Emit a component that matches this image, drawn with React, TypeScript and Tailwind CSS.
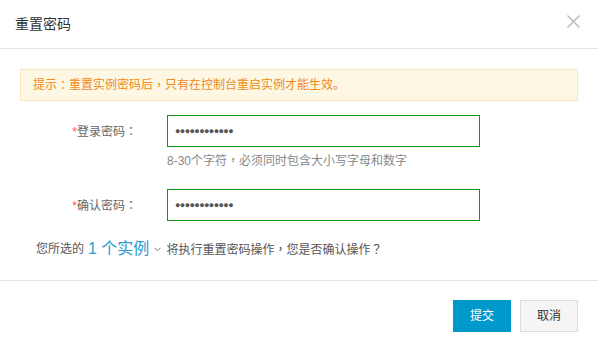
import React from "react";

const font = { fontFamily: '"Liberation Sans", "Noto Sans CJK SC", sans-serif' };
const tc = { fontFamily: '"Noto Sans CJK TC", sans-serif' };

function P({ c }: { c: string }) {
  return <span style={tc}>{c}</span>;
}

function Row({ label, children }: { label: string; children: React.ReactNode }) {
  return (
    <div className="flex items-center pl-[20px]">
      <div className="w-[117px] text-right text-[12px] text-[#666] leading-[18px]">
        <span className="text-[#f55]">*</span>
        {label}
        <P c="：" />
      </div>
      <div className="ml-[30px]">{children}</div>
    </div>
  );
}

function Pwd() {
  return (
    <div className="w-[313px] h-[32px] border border-[#129712] flex items-center pl-[7px]">
      <span className="text-[#555] text-[9px] tracking-[-0.6px] leading-none">●●●●●●●●●●●●</span>
    </div>
  );
}

export default function App() {
  return (
    <div className="w-[598px] h-[348px] bg-white relative" style={font}>
      <div className="h-[49px] border-b border-[#e5e5e5] flex items-center pl-[15px]">
        <span className="text-[14px] text-[#333]">重置密码</span>
      </div>
      <svg className="absolute left-[567px] top-[15px]" width="13" height="13" viewBox="0 0 13 13">
        <path d="M0.5 0.5 L12.5 12.5 M12.5 0.5 L0.5 12.5" stroke="#b5b5b5" strokeWidth="1.4" fill="none" />
      </svg>
      <div className="px-[20px] pt-[20px]">
        <div className="h-[32px] border border-[#fae6bd] bg-[#fdf7e3] flex items-center pl-[12px] text-[12px] text-[#f08a1c]">
          提示<P c="：" />重置实例密码后<P c="，" />只有在控制台重启实例才能生效。
        </div>
      </div>
      <div className="mt-[14px]">
        <Row label="登录密码">
          <Pwd />
        </Row>
        <div className="ml-[167px] mt-[4px] text-[12px] leading-[18px] text-[#888]">
          8-30个字符<P c="，" />必须同时包含大小写字母和数字
        </div>
        <div className="mt-[19px]">
          <Row label="确认密码">
            <Pwd />
          </Row>
        </div>
      </div>
      <div className="mt-[18px] pl-[36px] flex items-center h-[20px] text-[12px] text-[#555]">
        <span>您所选的</span>
        <span className="ml-[4px] text-[16px] text-[#2a9bd0]">1 个实例</span>
        <svg className="ml-[5px] mr-[5px]" width="7" height="5" viewBox="0 0 7 5">
          <path d="M0.5 0.8 L3.5 3.8 L6.5 0.8" stroke="#777" strokeWidth="1" fill="none" />
        </svg>
        <span>
          将执行重置密码操作<P c="，" />您是否确认操作<P c="？" />
        </span>
      </div>
      <div className="mt-[21px] border-t border-[#e5e5e5] pt-[19px] flex justify-end pr-[20px] gap-[9px]">
        <button className="w-[58px] h-[32px] bg-[#0099cc] text-white text-[12px]">提交</button>
        <button className="w-[58px] h-[32px] bg-[#f5f5f5] border border-[#ddd] text-[#333] text-[12px]">取消</button>
      </div>
    </div>
  );
}
